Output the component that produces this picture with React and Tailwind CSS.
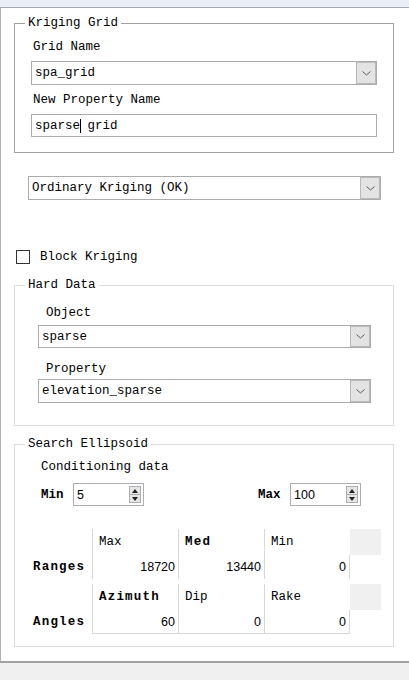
import React from 'react';

const MONO = "font-['Liberation_Mono',monospace] text-[12.5px] leading-[16px] text-black";
const SANS = "font-['Liberation_Sans',Arial,sans-serif] text-[12.5px] leading-[16px] text-black";

function Chevron() {
  return (
    <svg width="9" height="5" viewBox="0 0 9 5" aria-hidden>
      <polyline points="0.5,0.5 4.5,4 8.5,0.5" fill="none" stroke="#5c5c5c" strokeWidth="1" />
    </svg>
  );
}

function Combo({ value, className = '' }) {
  return (
    <div className={`flex items-stretch border border-[#acacac] bg-white ${className}`}>
      <span className={`${MONO} flex flex-1 items-center pl-[3px]`}>{value}</span>
      <span className="flex w-[20px] items-center justify-center border border-[#b9b9b9] bg-[#e3e3e3]">
        <Chevron />
      </span>
    </div>
  );
}

function SpinBox({ value }) {
  return (
    <div className="flex h-[23px] w-[71px] border border-[#abadb3] bg-white">
      <span className={`${SANS} flex flex-1 items-center pl-[3px]`}>{value}</span>
      <div className="my-[2px] mr-[2px] flex w-[12px] flex-col border border-[#adadad] bg-[#e6e6e6]">
        <span className="flex flex-1 items-center justify-center border-b border-[#adadad]">
          <svg width="6" height="4" viewBox="0 0 6 4" aria-hidden>
            <polygon points="0,4 3,0 6,4" fill="#222" />
          </svg>
        </span>
        <span className="flex flex-1 items-center justify-center">
          <svg width="6" height="4" viewBox="0 0 6 4" aria-hidden>
            <polygon points="0,0 6,0 3,4" fill="#222" />
          </svg>
        </span>
      </div>
    </div>
  );
}

// padding goes on the inner div so the legend stays at a fixed offset from the border
function GroupBox({ title, className = '', innerClassName = '', children }) {
  return (
    <fieldset className={`border ${className}`}>
      <legend className={`${MONO} ml-[10px] px-[3px]`}>{title}</legend>
      <div className={innerClassName}>{children}</div>
    </fieldset>
  );
}

function ParamTable({ rowLabel, headers, values, last }) {
  return (
    <div className="grid grid-cols-[59px_86px_86px_86px_31px]">
      <div className="h-[26px]" />
      {headers.map((h) => (
        <div
          key={h.label}
          className={`${MONO} flex h-[26px] items-center border-l border-[#d8d8d8] pl-[6px] ${
            h.bold ? 'font-bold tracking-[1.2px]' : ''
          }`}
        >
          {h.label}
        </div>
      ))}
      <div className="h-[26px] bg-[#f0f0f0]" />

      <div className={`${MONO} flex items-center font-bold tracking-[1.2px]`}>{rowLabel}</div>
      {values.map((v, i) => (
        <div
          key={i}
          className={`${SANS} flex h-[24px] items-center justify-end border-l border-[#d8d8d8] pr-[3px] ${
            i === values.length - 1 ? 'border-r' : ''
          } ${last ? 'border-b' : ''}`}
        >
          {v}
        </div>
      ))}
      <div />
    </div>
  );
}

export default function App() {
  return (
    <div className="flex h-[680px] w-[409px] flex-col bg-white">
      <div className="h-[8px] border-b border-[#a2a8af] bg-[#eaeff5]" />

      <div className="flex flex-1 flex-col border-l border-[#b4b4b4] pl-[13px] pr-[15px]">
        <GroupBox
          title="Kriging Grid"
          className="mt-[7px] border-[#a0a0a0]"
          innerClassName="px-[16px] pb-[15px]"
        >
          <div className={`${MONO} mt-[8px] pl-[2px]`}>Grid Name</div>
          <Combo value="spa_grid" className="mt-[6px] h-[24px]" />
          <div className={`${MONO} mt-[7px] pl-[2px]`}>New Property Name</div>
          <div className={`${MONO} mt-[6px] flex h-[23px] items-center border border-[#acacac] pl-[3px]`}>
            <span>sparse</span>
            <span className="-mr-[1px] inline-block h-[14px] w-[1px] bg-black" />
            <span>{'\u00a0'}grid</span>
          </div>
        </GroupBox>

        <Combo value="Ordinary Kriging (OK)" className="mt-[23px] ml-[14px] mr-[13px] h-[24px]" />

        <label className="mt-[49px] ml-[2px] flex h-[16px] items-center">
          <span className="h-[14px] w-[14px] border border-[#333333] bg-white" />
          <span className={`${MONO} ml-[10px]`}>Block Kriging</span>
        </label>

        <GroupBox
          title="Hard Data"
          className="mt-[12px] border-[#dcdcdc]"
          innerClassName="pl-[23px] pr-[22px] pb-[22px]"
        >
          <div className={`${MONO} mt-[12px] pl-[8px]`}>Object</div>
          <Combo value="sparse" className="mt-[4px] h-[23px]" />
          <div className={`${MONO} mt-[13px] pl-[8px]`}>Property</div>
          <Combo value="elevation_sparse" className="mt-[2px] h-[24px]" />
        </GroupBox>

        <GroupBox
          title="Search Ellipsoid"
          className="mt-[10px] border-[#dcdcdc]"
          innerClassName="pl-[18px] pb-[12px]"
        >
          <div className={`${MONO} mt-[7px] ml-[8px]`}>Conditioning data</div>
          <div className="mt-[8px] ml-[8px] flex items-center">
            <span className={`${MONO} w-[32px] font-bold`}>Min</span>
            <SpinBox value="5" />
            <span className={`${MONO} ml-[114px] w-[32px] font-bold`}>Max</span>
            <SpinBox value="100" />
          </div>

          <div className="mt-[23px]">
            <ParamTable
              rowLabel="Ranges"
              headers={[
                { label: 'Max' },
                { label: 'Med', bold: true },
                { label: 'Min' },
              ]}
              values={['18720', '13440', '0']}
            />
            <div className="h-[5px]" />
            <ParamTable
              rowLabel="Angles"
              headers={[
                { label: 'Azimuth', bold: true },
                { label: 'Dip' },
                { label: 'Rake' },
              ]}
              values={['60', '0', '0']}
              last
            />
          </div>
        </GroupBox>
      </div>

      <div className="h-[19px] border-t-2 border-[#a3a3a3] bg-[#f0f0f0]" />
    </div>
  );
}
